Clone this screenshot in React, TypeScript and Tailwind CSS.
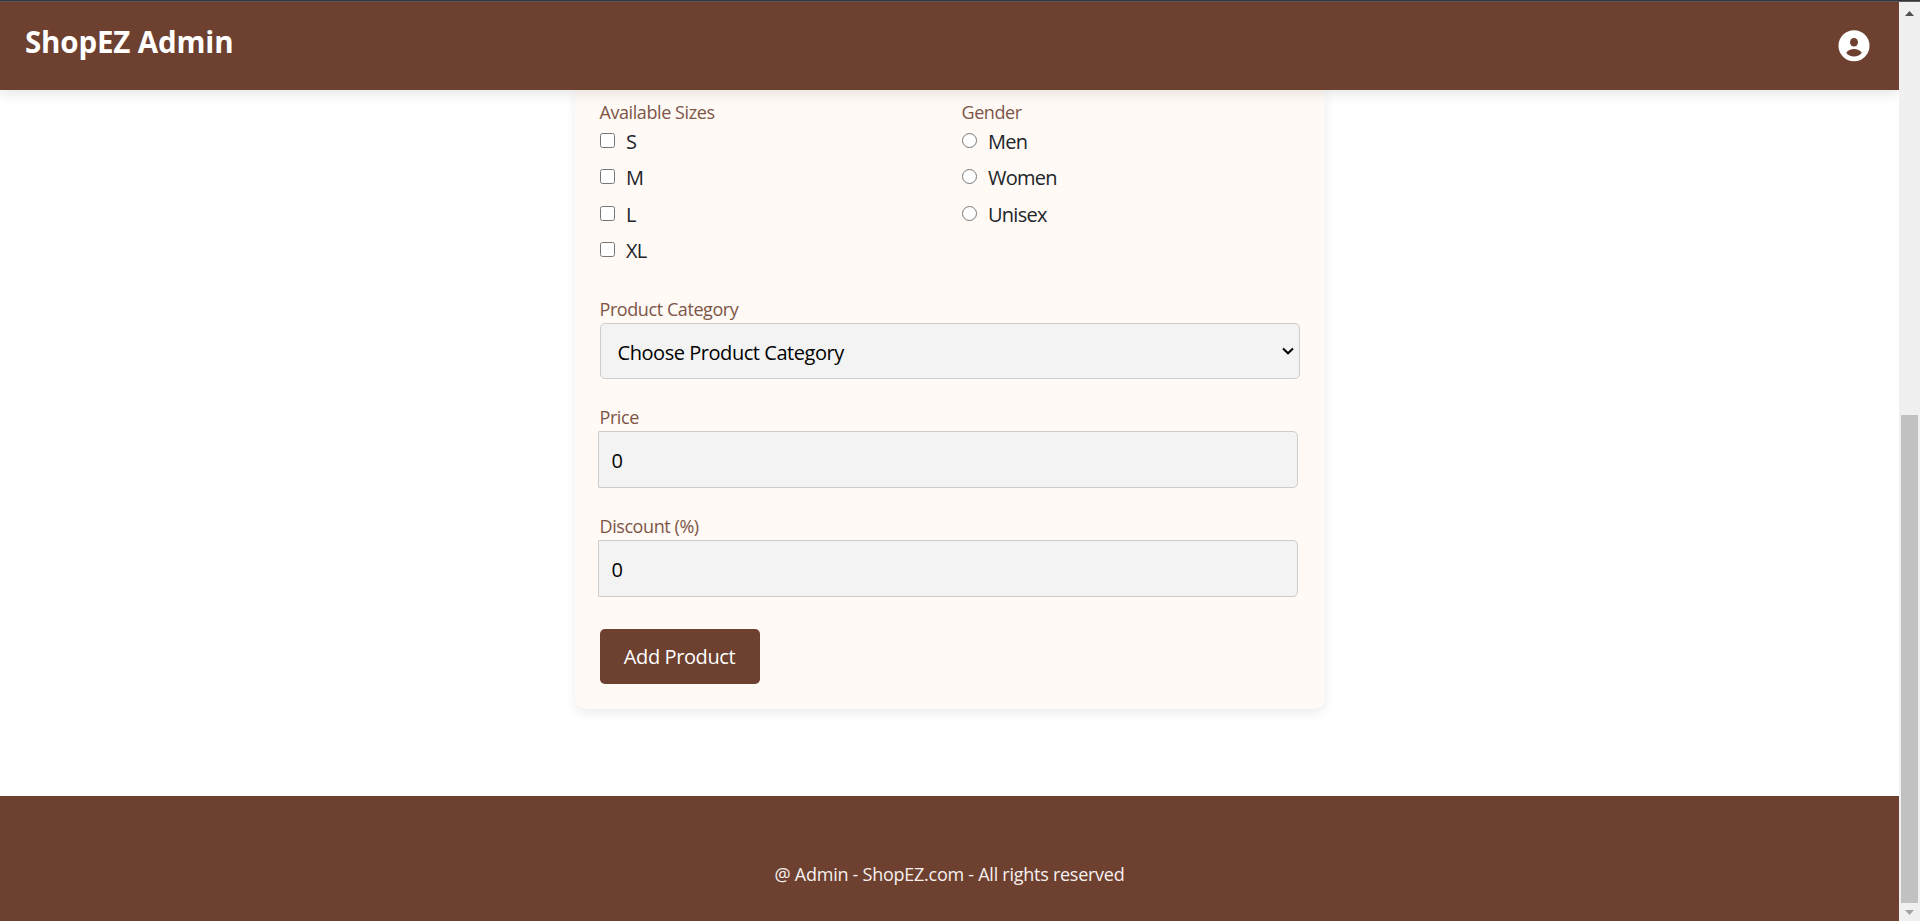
import React from "react";

const sizes = ["S", "M", "L", "XL"];
const genders = ["Men", "Women", "Unisex"];

function AccountIcon({ className }: { className: string }) {
  return (
    <svg className={className} viewBox="0 0 40 40">
      <circle cx="20" cy="19.8" r="15.5" fill="#fff" />
      <ellipse cx="20" cy="16.2" rx="4" ry="4.3" fill="#6d4030" />
      <path d="M12.2 26.8C14 24.2 16.8 23 20 23s6 1.200 7.800 3.800C26 29.300 23.200 30.600 20 30.600s-6-1.300-7.800-3.800z" fill="#6d4030" />
    </svg>
  );
}

function Label({ children }: { children: React.ReactNode }) {
  return (
    <div className="h-6 text-[18px] leading-6 tracking-[-0.42px] whitespace-nowrap text-[#7d5547]">{children}</div>
  );
}

function Option({ type, label }: { type: "checkbox" | "radio"; label: string }) {
  return (
    <label className="flex h-[36.35px] items-start text-[20px] leading-[30px] tracking-[-0.75px] text-[#212529]">
      <input type={type} name={type} className="mt-[9px] mr-[11.5px] size-[15px] shrink-0" />
      <span className="mt-[3px]">{label}</span>
    </label>
  );
}

function Field({ label, className }: { label: string; className: string }) {
  return (
    <div className={className}>
      <Label>{label}</Label>
      <input
        type="text"
        defaultValue="0"
        className="mt-0.5 -ml-0.5 block h-[57px] w-[700px] rounded-r-[5px] rounded-l-[1px] border border-[#ccc] bg-[#f3f3f3] px-[13px] pt-0.5 text-[20px] text-black"
      />
    </div>
  );
}

export default function App() {
  return (
    <div className="flex h-[921px] w-full flex-col overflow-hidden bg-white font-['Open_Sans','Noto_Sans',sans-serif]">
      <div className="h-0.5 shrink-0 border-b border-[#5b5b5b] bg-[#30363b]" />
      <div className="flex min-h-0 flex-1">
        <div className="flex min-w-0 flex-1 flex-col overflow-hidden">
          <header className="z-10 flex h-[88px] shrink-0 items-start justify-between bg-[#6d4030] pr-[25px] pl-[25px] shadow-[0_4px_12px_rgba(0,0,0,0.1)]">
            <h1 className="mt-5 text-[29.5px] leading-10 font-bold tracking-[-0.15px] text-white">ShopEZ Admin</h1>
            <AccountIcon className="mt-6 size-10" />
          </header>

          <main className="flex h-[706px] shrink-0 justify-center">
            <form className="h-[619px] w-[750px] rounded-b-[10px] bg-[#fffaf5] px-[25px] shadow-[0_4px_12px_rgba(0,0,0,0.08)]">
              <div className="flex h-[196px] pt-2.5">
                <div className="w-[362px]">
                  <Label>Available Sizes</Label>
                  {sizes.map((s) => (
                    <Option key={s} type="checkbox" label={s} />
                  ))}
                </div>
                <div>
                  <Label>Gender</Label>
                  {genders.map((g) => (
                    <Option key={g} type="radio" label={g} />
                  ))}
                </div>
              </div>

              <div className="mt-[11px]">
                <Label>Product Category</Label>
                <div className="mt-0.5 grid items-center">
                  <select className="col-start-1 row-start-1 block h-14 w-full appearance-none rounded-[5px] border border-[#ccc] bg-[#f3f3f3] pt-[3px] pr-8 pl-[17px] text-[20px] tracking-[-0.45px] text-black">
                    <option>Choose Product Category</option>
                  </select>
                  <svg
                    className="pointer-events-none col-start-1 row-start-1 mr-1.5 h-[8px] w-[12px] justify-self-end"
                    viewBox="0 0 12 8"
                    fill="none"
                    stroke="#000"
                    strokeWidth="2"
                  >
                    <path d="M1 1.500 6 6.300 11 1.500" />
                  </svg>
                </div>
              </div>
              <Field label="Price" className="mt-[26px]" />
              <Field label="Discount (%)" className="mt-[26px]" />

              <button
                type="button"
                className="mt-8 flex h-[55px] w-40 items-center justify-center rounded-[5px] bg-[#6d4030] text-[20px] tracking-[-0.4px] whitespace-nowrap text-white"
              >
                Add Product
              </button>
            </form>
          </main>

          <footer className="flex flex-1 justify-center bg-[#6d4030] pt-[65px] text-[18px] leading-[27px] tracking-[-0.26px] text-[#f6f1ef]">
            <p>@ Admin - ShopEZ.com - All rights reserved</p>
          </footer>
        </div>

        <div className="flex w-[21px] shrink-0 flex-col items-center bg-[#f0f0f0]">
          <svg className="mt-[9px] h-[5px] w-[9px]" viewBox="0 0 9 5" fill="#505050">
            <path d="M0 5 4.5 0 9 5z" />
          </svg>
          <div className="mt-[399px] h-[488px] w-[17px] bg-[#c1c1c1]" />
          <svg className="mt-[7px] h-[5px] w-[9px]" viewBox="0 0 9 5" fill="#a3a3a3">
            <path d="M0 0h9L4.5 5z" />
          </svg>
        </div>
      </div>
    </div>
  );
}
